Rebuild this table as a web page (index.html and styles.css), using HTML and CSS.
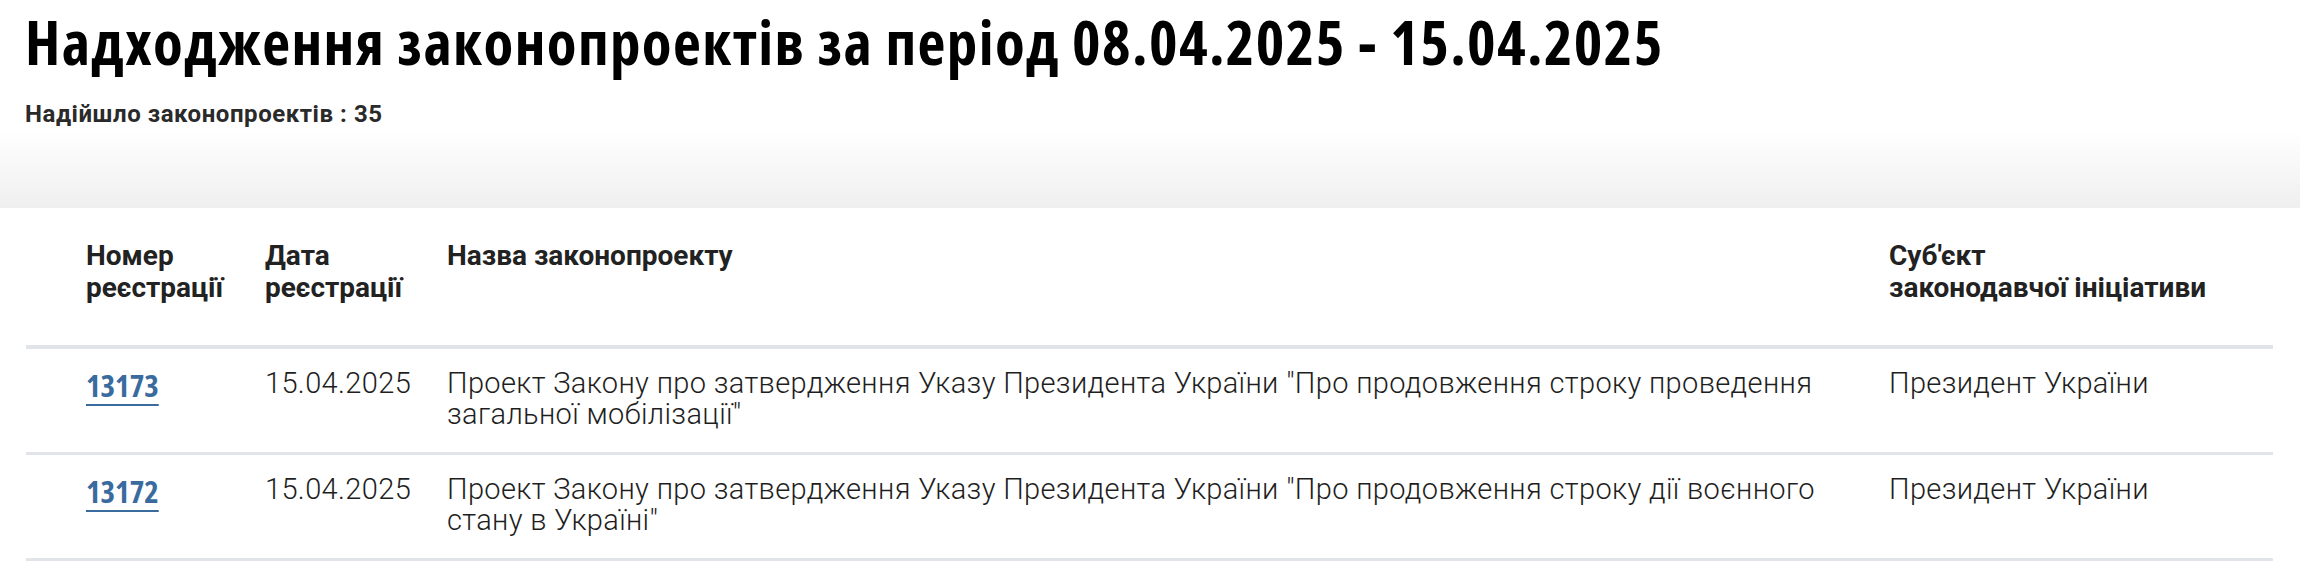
FILE: index.html
```html
<!DOCTYPE html>
<html lang="uk">
<head>
<meta charset="utf-8">
<title>Надходження законопроектів</title>
<link rel="stylesheet" href="styles.css">
</head>
<body>
<header class="page-head">
  <h1 class="title">Надходження законопроектів за період 08.04.2025 - 15.04.2025</h1>
  <p class="count">Надійшло законопроектів : 35</p>
</header>
<div class="band"></div>
<section class="bills">
  <div class="bills-head">
    <div class="cell c-num">Номер реєстрації</div>
    <div class="cell c-date">Дата реєстрації</div>
    <div class="cell c-name">Назва законопроекту</div>
    <div class="cell c-subj">Суб'єкт<br>законодавчої ініціативи</div>
  </div>
  <div class="bill-row">
    <div class="cell c-num"><a class="bill-num" href="#">13173</a></div>
    <div class="cell c-date">15.04.2025</div>
    <div class="cell c-name">Проект Закону про затвердження Указу Президента України "Про продовження строку проведення загальної мобілізації"</div>
    <div class="cell c-subj">Президент України</div>
  </div>
  <div class="bill-row">
    <div class="cell c-num"><a class="bill-num" href="#">13172</a></div>
    <div class="cell c-date">15.04.2025</div>
    <div class="cell c-name">Проект Закону про затвердження Указу Президента України "Про продовження строку дії воєнного стану в Україні"</div>
    <div class="cell c-subj">Президент України</div>
  </div>
</section>
</body>
</html>
```
FILE: styles.css
```css
html, body {
  margin: 0;
  background: #fff;
}
body {
  font-family: Roboto, "Liberation Sans", sans-serif;
  color: #222;
}
.page-head {
  padding: 6px 25px 0;
}
.title {
  margin: 0;
  font-family: "Open Sans", "Liberation Sans", sans-serif;
  font-stretch: 75%;
  font-weight: 700;
  font-size: 61px;
  line-height: 72px;
  color: #000;
  letter-spacing: 1.35px;
}
.count {
  margin: 22px 0 0;
  font-weight: 700;
  font-size: 24px;
  line-height: 28px;
  color: #2a2a2a;
  letter-spacing: 0.55px;
}
.band {
  margin-top: 2px;
  height: 78px;
  background: linear-gradient(#fff, #efefef);
}
.bills {
  margin: 0 27px 0 26px;
}
.bills-head,
.bill-row {
  display: grid;
  grid-template-columns: 239px 182px 1fr 384px;
}
.bills-head {
  padding: 32px 0 41px;
  border-bottom: 4px solid #e1e4e8;
  font-weight: 700;
  font-size: 28px;
  line-height: 32px;
  color: #222;
}
.bill-row {
  padding: 19px 0 22px;
  border-bottom: 3px solid #e1e4e8;
  font-weight: 300;
  font-size: 29px;
  line-height: 31px;
  letter-spacing: 0.35px;
  color: #1e1e1e;
}
.c-num {
  padding-left: 60px;
}
.c-date {
  padding-right: 20px;
}
.c-name {
  padding-right: 40px;
}
.bill-num {
  display: inline-block;
  vertical-align: -4px;
  font-family: "Open Sans", "Liberation Sans", sans-serif;
  font-stretch: 75%;
  font-weight: 700;
  font-size: 31px;
  letter-spacing: 0;
  color: #3a6b9e;
  text-decoration: underline;
  text-decoration-thickness: 2px;
  text-underline-offset: 7px;
}
```
